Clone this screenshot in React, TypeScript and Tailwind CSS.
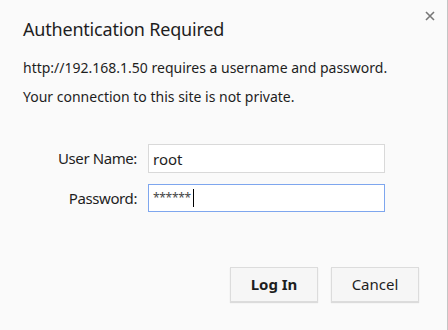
import { useState } from "react";

export default function App() {
  const [user, setUser] = useState("root");
  const password = "******";

  return (
    <div className="relative flex h-[330px] w-[448px] flex-col border-r border-[#c4c4c4] bg-[#fafafa] font-['Noto_Sans',sans-serif] text-[#1e1e1e]">
      <button className="absolute right-[11px] top-[10px] flex h-[12px] w-[12px] items-center justify-center text-[#777]">
        <svg width="10" height="10" viewBox="0 0 10 10">
          <path d="M1 1L9 9M9 1L1 9" stroke="currentColor" strokeWidth="1.6" />
        </svg>
      </button>

      <div className="px-[23px] pt-[17px]">
        <h1 className="text-[18px] leading-[24px] tracking-[-0.2px]">Authentication Required</h1>
        <p className="mt-[17px] text-[14px] leading-[20px]">
          http://192.168.1.50 requires a username and password.
        </p>
        <p className="mt-[9px] text-[14px] leading-[20px]">
          Your connection to this site is not private.
        </p>
      </div>

      <div className="mt-[37px] grid grid-cols-[125px_237px] items-center gap-x-[11px] gap-y-[11px] pl-[12px]">
        <label className="text-right text-[15px] tracking-[-0.4px]">User Name:</label>
        <input
          value={user}
          onChange={(e) => setUser(e.target.value)}
          className="h-[29px] border border-[#d9d9d9] bg-white px-[4px] text-[15px] outline-none"
        />
        <label className="text-right text-[15px] tracking-[-0.4px]">Password:</label>
        <div className="flex h-[28px] items-center border border-[#7ea6ee] bg-white px-[4px]">
          <span className="text-[12px] leading-none tracking-[-0.3px] text-[#444]">{password}</span>
          <span className="ml-[2px] h-[18px] w-[1px] bg-black" />
        </div>
      </div>

      <div className="mt-auto mb-[28px] flex justify-end gap-[13px] pr-[28px]">
        <button className="h-[35px] w-[88px] border border-[#dcdcdc] bg-[#f6f6f6] text-[15px] font-bold shadow-[0_1px_1px_rgba(0,0,0,0.12)]">
          Log In
        </button>
        <button className="h-[35px] w-[88px] border border-[#dcdcdc] bg-[#f6f6f6] text-[15px] shadow-[0_1px_1px_rgba(0,0,0,0.12)]">
          Cancel
        </button>
      </div>
    </div>
  );
}
